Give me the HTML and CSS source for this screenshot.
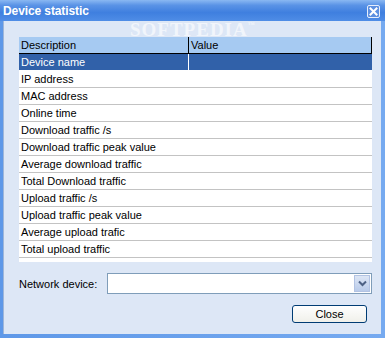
FILE: index.html
```html
<!DOCTYPE html>
<html lang="en">
<head>
    <meta charset="UTF-8">
    <title>Device statistic</title>
    <link rel="stylesheet" href="styles.css">
</head>
<body>
    <div class="window">
        <div class="titlebar">
            <span class="title">Device statistic</span>
            <span class="xbtn">
                <svg width="13" height="13" viewBox="0 0 13 13">
                    <path d="M3.5 3.5 L9.5 9.5 M9.5 3.5 L3.5 9.5" stroke="#fff" stroke-width="2" stroke-linecap="square"/>
                </svg>
            </span>
        </div>
        <div class="content">
            <div class="watermark">SOFTPEDIA<sup>™</sup></div>
            <div class="list">
                <div class="head">
                    <div class="col-desc">Description</div>
                    <div class="col-val">Value</div>
                </div>
                <div class="row selected"><div class="col-desc">Device name</div><div class="col-val"></div></div>
                <div class="row"><div class="col-desc">IP address</div></div>
                <div class="row"><div class="col-desc">MAC address</div></div>
                <div class="row"><div class="col-desc">Online time</div></div>
                <div class="row"><div class="col-desc">Download traffic /s</div></div>
                <div class="row"><div class="col-desc">Download traffic peak value</div></div>
                <div class="row"><div class="col-desc">Average download traffic</div></div>
                <div class="row"><div class="col-desc">Total Download traffic</div></div>
                <div class="row"><div class="col-desc">Upload traffic /s</div></div>
                <div class="row"><div class="col-desc">Upload traffic peak value</div></div>
                <div class="row"><div class="col-desc">Average upload trafic</div></div>
                <div class="row"><div class="col-desc">Total upload traffic</div></div>
            </div>
            <div class="device-row">
                <label>Network device:</label>
                <div class="combo">
                    <span class="drop">
                        <svg width="9" height="7" viewBox="0 0 9 7">
                            <path d="M1 1.5 L4.5 5 L8 1.5" fill="none" stroke="#4d6185" stroke-width="2"/>
                        </svg>
                    </span>
                </div>
            </div>
            <div class="actions">
                <button class="close">Close</button>
            </div>
        </div>
    </div>
</body>
</html>
```

FILE: styles.css
```css
body {
    margin: 0;
    font-family: "Liberation Sans", Arial, sans-serif;
    font-size: 11px;
    background: #fff;
}
.window {
    width: 385px;
    height: 338px;
    box-sizing: border-box;
    display: flex;
    flex-direction: column;
    background: linear-gradient(to right, #5e98e8, #76aaf0);
}
.titlebar {
    height: 21px;
    display: flex;
    align-items: center;
    justify-content: space-between;
    padding: 0 4px 0 3px;
    background: linear-gradient(to bottom, #8ab8f2 0%, #5a93e6 25%, #3f7fdf 60%, #4f8de6 100%);
}
.title {
    color: #fff;
    font-weight: bold;
    font-size: 12px;
    letter-spacing: -0.1px;
}
.xbtn {
    width: 13px;
    height: 13px;
    box-sizing: border-box;
    border: 1px solid #e6eefc;
    border-radius: 2px;
    background: #5c8fe0;
    display: flex;
    margin-top: 1px;
    margin-right: 1px;
}
.xbtn svg {
    margin: -1px;
}
.content {
    position: relative;
    flex: 1;
    margin: 0 4px 4px 3px;
    border-left: 1px solid #9fb6d8;
    background: #dde7f6;
    padding: 16px 9px 0 15px;
    display: flex;
    flex-direction: column;
}
.watermark {
    position: absolute;
    left: 126px;
    top: 1px;
    font-family: "Liberation Serif", serif;
    font-size: 19px;
    line-height: 15px;
    font-weight: bold;
    color: rgba(255, 255, 255, 0.6);
    letter-spacing: 1px;
}
.watermark sup {
    font-size: 7px;
    line-height: 7px;
    vertical-align: top;
}
.list {
    height: 225px;
    background: #fff;
}
.head {
    display: flex;
    height: 16px;
    background: #a6caf2;
    border-bottom: 1px solid #000;
    border-right: 1px solid #000;
}
.head .col-val {
    border-left: 1px solid #000;
}
.col-desc {
    width: 167px;
    padding-left: 2px;
    line-height: 16px;
    color: #000;
}
.col-val {
    flex: 1;
    padding-left: 2px;
    line-height: 16px;
}
.row {
    display: flex;
    height: 16px;
    border-bottom: 1px solid #c3c3c3;
}
.row.selected {
    background: #3161a9;
    border-bottom-color: #fff;
}
.row.selected .col-desc {
    color: #fff;
}
.row.selected .col-val {
    border-left: 1px solid #fff;
}
.device-row {
    display: flex;
    align-items: center;
    margin-top: 11px;
}
.device-row label {
    width: 88px;
    color: #000;
}
.combo {
    flex: 1;
    height: 21px;
    box-sizing: border-box;
    border: 1px solid #7f9db9;
    background: #fff;
    display: flex;
    justify-content: flex-end;
    padding: 1px;
}
.drop {
    width: 16px;
    height: 17px;
    background: linear-gradient(to bottom, #dde6f5, #b9cbea);
    border: 1px solid #b2c3e3;
    box-sizing: border-box;
    display: flex;
    align-items: center;
    justify-content: center;
}
.actions {
    display: flex;
    justify-content: flex-end;
    margin-top: 11px;
    padding-right: 5px;
}
.close {
    width: 75px;
    height: 18px;
    font-family: "Liberation Sans", Arial, sans-serif;
    font-size: 11px;
    color: #000;
    background: linear-gradient(to bottom, #fefefe, #f0f0ea);
    border: 1px solid #003c74;
    border-radius: 3px;
    padding: 0;
}
```
